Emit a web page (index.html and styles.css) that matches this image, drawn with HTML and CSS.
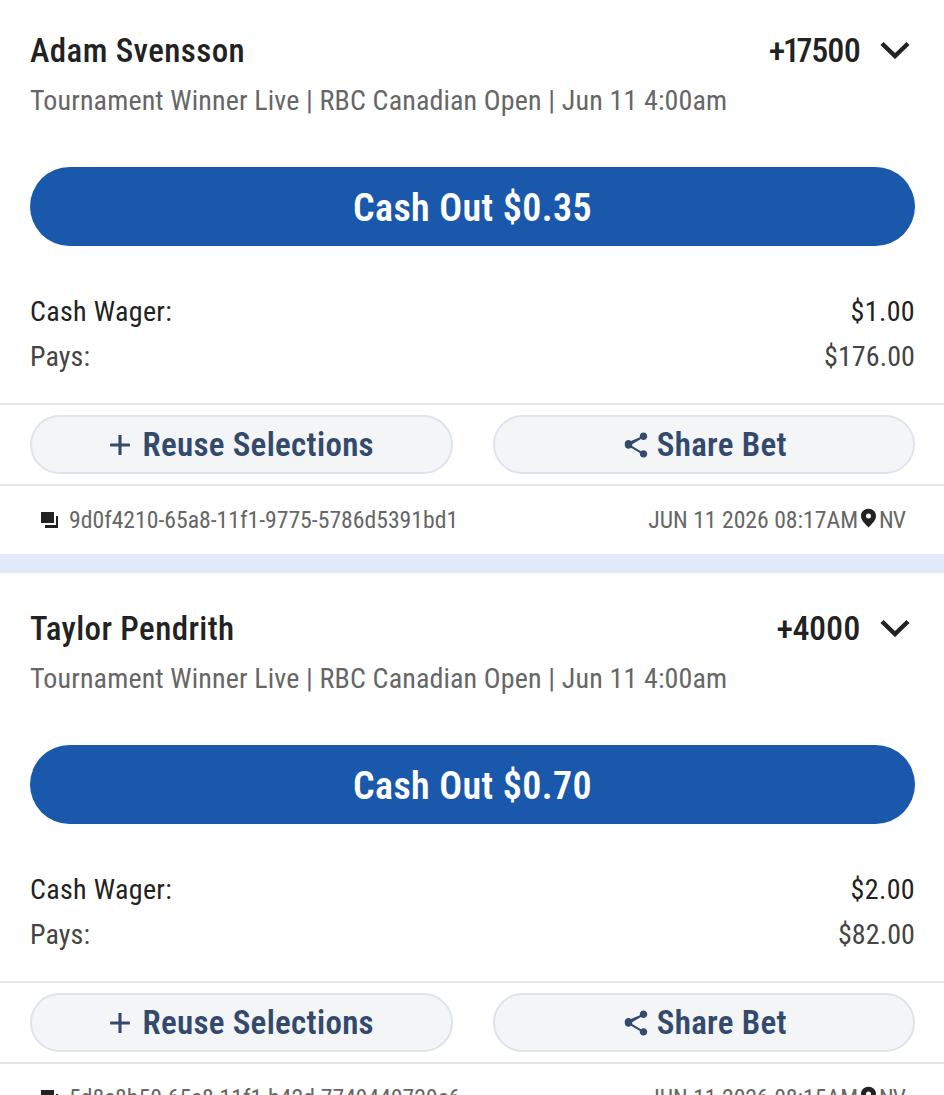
FILE: index.html
```html
<!DOCTYPE html>
<html lang="en">
<head>
  <meta charset="UTF-8">
  <title>My Bets</title>
  <link rel="stylesheet" href="styles.css">
</head>
<body>
  <div class="bet">
    <div class="bet-main">
      <div class="bet-head">
        <div class="bet-name">Adam Svensson</div>
        <div class="bet-odds bet-odds-long">+17500</div>
        <svg class="chevron" viewBox="0 0 30 18"><path d="M2 2.500 15 15 28 2.500" /></svg>
      </div>
      <div class="bet-desc">Tournament Winner Live | RBC Canadian Open | Jun 11 4:00am</div>
      <button class="cashout">Cash Out $0.35</button>
      <div class="amount-row"><span class="amount-label">Cash Wager:</span><span class="amount-value">$1.00</span></div>
      <div class="amount-row amount-pays"><span class="amount-label">Pays:</span><span class="amount-value">$176.00</span></div>
    </div>
    <div class="bet-actions">
      <button class="action">
        <svg class="icon-plus" viewBox="0 0 20 20"><path d="M10 1v18M1 10h18" /></svg>
        Reuse Selections
      </button>
      <button class="action">
        <svg class="icon-share" viewBox="0 0 24 24"><path d="M18 16.100c-.8 0-1.500.3-2 .8L8.900 12.700c.1-.2.100-.5.100-.7s0-.5-.1-.7L16 7.200c.5.500 1.200.8 2 .8 1.700 0 3-1.300 3-3s-1.300-3-3-3-3 1.300-3 3c0 .2 0 .5.100.7L8 8.800C7.500 8.300 6.800 8 6 8c-1.700 0-3 1.300-3 3v1c0 1.700 1.300 3 3 3 .8 0 1.500-.3 2-.8l7.100 4.200c-.1.200-.1.400-.1.600 0 1.600 1.300 3 3 3s3-1.400 3-3-1.300-2.900-3-2.900z" /></svg>
        Share Bet
      </button>
    </div>
    <div class="bet-meta">
      <svg class="icon-copy" viewBox="0 0 20 20"><path d="M1 2h13v11H1z" /><path d="M16 6h2v12H5v-3h11z" /></svg>
      <span class="bet-id">9d0f4210-65a8-11f1-9775-5786d5391bd1</span>
      <span class="bet-time">JUN 11 2026 08:17AM</span>
      <svg class="icon-pin" viewBox="3 0 18 24"><path fill-rule="evenodd" d="M12 1C7 1 3 4.500 3 9.500c0 5.500 5.500 9.500 9 14 3.500-4.500 9-8.500 9-14C21 4.500 17 1 12 1zm0 11.500a3 3 0 1 1 0-6 3 3 0 0 1 0 6z" /></svg>
      <span class="bet-state">NV</span>
    </div>
  </div>

  <div class="bet-gap"></div>

  <div class="bet">
    <div class="bet-main">
      <div class="bet-head">
        <div class="bet-name">Taylor Pendrith</div>
        <div class="bet-odds">+4000</div>
        <svg class="chevron" viewBox="0 0 30 18"><path d="M2 2.500 15 15 28 2.500" /></svg>
      </div>
      <div class="bet-desc">Tournament Winner Live | RBC Canadian Open | Jun 11 4:00am</div>
      <button class="cashout">Cash Out $0.70</button>
      <div class="amount-row"><span class="amount-label">Cash Wager:</span><span class="amount-value">$2.00</span></div>
      <div class="amount-row amount-pays"><span class="amount-label">Pays:</span><span class="amount-value">$82.00</span></div>
    </div>
    <div class="bet-actions">
      <button class="action">
        <svg class="icon-plus" viewBox="0 0 20 20"><path d="M10 1v18M1 10h18" /></svg>
        Reuse Selections
      </button>
      <button class="action">
        <svg class="icon-share" viewBox="0 0 24 24"><path d="M18 16.100c-.8 0-1.500.3-2 .8L8.900 12.700c.1-.2.100-.5.100-.7s0-.5-.1-.7L16 7.200c.5.500 1.200.8 2 .8 1.700 0 3-1.300 3-3s-1.300-3-3-3-3 1.300-3 3c0 .2 0 .5.100.7L8 8.800C7.500 8.300 6.800 8 6 8c-1.700 0-3 1.300-3 3v1c0 1.700 1.300 3 3 3 .8 0 1.500-.3 2-.8l7.100 4.200c-.1.200-.1.400-.1.600 0 1.600 1.300 3 3 3s3-1.400 3-3-1.300-2.900-3-2.900z" /></svg>
        Share Bet
      </button>
    </div>
    <div class="bet-meta">
      <svg class="icon-copy" viewBox="0 0 20 20"><path d="M1 2h13v11H1z" /><path d="M16 6h2v12H5v-3h11z" /></svg>
      <span class="bet-id">5d8c8b50-65c8-11f1-b42d-7749449729c6</span>
      <span class="bet-time">JUN 11 2026 08:15AM</span>
      <svg class="icon-pin" viewBox="3 0 18 24"><path fill-rule="evenodd" d="M12 1C7 1 3 4.500 3 9.500c0 5.500 5.500 9.500 9 14 3.500-4.500 9-8.500 9-14C21 4.500 17 1 12 1zm0 11.500a3 3 0 1 1 0-6 3 3 0 0 1 0 6z" /></svg>
      <span class="bet-state">NV</span>
    </div>
  </div>
</body>
</html>
```
FILE: styles.css
```css
html, body {
  margin: 0;
  height: 1095px;
  overflow: hidden;
}
body {
  font-family: Roboto, "Liberation Sans", sans-serif;
  font-stretch: 75%;
  background-color: #fff;
  color: #222;
}
button {
  font-family: inherit;
  font-stretch: inherit;
  cursor: pointer;
}
.bet-main {
  padding: 30px 29px 0 30px;
  height: 373px;
  box-sizing: border-box;
}
.bet-head {
  display: flex;
  align-items: center;
  height: 40px;
}
.bet-name {
  font-size: 33px;
  font-weight: 500;
  letter-spacing: 0.4px;
  flex: 1;
}
.bet-odds {
  font-size: 34px;
  font-weight: 500;
  font-variant-numeric: proportional-nums;
  letter-spacing: -0.6px;
}
.bet-odds-long {
  letter-spacing: -1.2px;
}
.chevron {
  width: 30px;
  height: 18px;
  margin: 0 5px 0 20px;
  fill: none;
  stroke: #222;
  stroke-width: 4.5;
}
.bet-desc {
  margin-top: 11px;
  font-size: 28px;
  line-height: 40px;
  color: #666;
  letter-spacing: 0.14px;
}
.cashout {
  display: block;
  width: 100%;
  height: 79px;
  margin-top: 46px;
  padding: 2px 0 0;
  border: 0;
  border-radius: 40px;
  background-color: #1a58ab;
  color: #fff;
  font-size: 38px;
  font-weight: 600;
  letter-spacing: 0.4px;
}
.amount-row {
  display: flex;
  justify-content: space-between;
  margin-top: 46px;
  font-size: 28px;
  font-weight: 430;
  letter-spacing: 0.35px;
  line-height: 40px;
}
.amount-pays {
  margin-top: 5px;
  font-weight: 400;
  letter-spacing: 0.1px;
  color: #444;
}
.bet-actions {
  display: flex;
  gap: 40px;
  padding: 10px 29px 10px 30px;
  border-top: 2px solid #e3e6ec;
  border-bottom: 2px solid #e3e6ec;
  margin-top: 30px;
}
.action {
  flex: 1;
  display: flex;
  align-items: center;
  justify-content: center;
  gap: 12px;
  height: 59px;
  border: 2px solid #dfe3ec;
  border-radius: 30px;
  background-color: #f4f5f7;
  color: #344a6c;
  font-size: 33px;
  font-weight: 600;
  letter-spacing: 0.3px;
}
.icon-plus {
  width: 22px;
  height: 22px;
  fill: none;
  stroke: #344a6c;
  stroke-width: 2.800;
}
.icon-share {
  width: 30px;
  height: 30px;
  margin-right: -6px;
  fill: #344a6c;
}
.bet-meta {
  display: flex;
  align-items: center;
  padding: 0 39px 0 40px;
  height: 68px;
  font-size: 23.700px;
  color: #666;
}
.icon-copy {
  width: 20px;
  height: 20px;
  margin-right: 9px;
  fill: #222;
}
.bet-id {
  flex: 1;
}
.icon-pin {
  width: 15px;
  height: 20px;
  margin: 0 3px 4px;
  fill: #222;
}
.bet-state {
  letter-spacing: -1px;
}
.bet-gap {
  height: 19px;
  margin-bottom: 5px;
  background-color: #e1eafa;
}
```
